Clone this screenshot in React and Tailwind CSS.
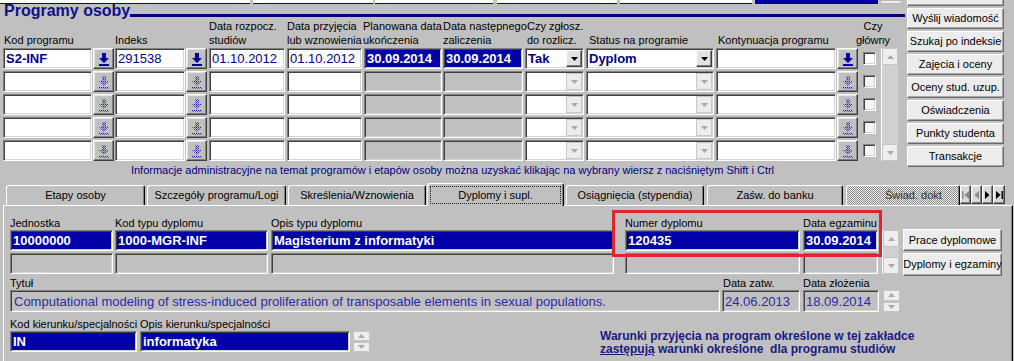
import React from 'react';

const sunk =
  'border border-t-[#808080] border-l-[#808080] border-r-white border-b-white shadow-[inset_1px_1px_0_#404040,inset_-1px_-1px_0_#d4d4d4]';
const raised =
  'border border-t-white border-l-white border-r-[#404040] border-b-[#404040] shadow-[inset_-1px_-1px_0_#808080,inset_1px_1px_0_#e4e4e4]';
const soft =
  'border border-t-white border-l-white border-r-[#6a6a6a] border-b-[#6a6a6a] shadow-[inset_-1px_-1px_0_#a8a8a8]';

function Field({ className = '', tone = 'white', children }) {
  const look =
    tone === 'blue'
      ? 'bg-[#0000a8] text-white font-bold'
      : tone === 'gray'
      ? 'bg-[#c0c0c0]'
      : 'bg-white';
  return (
    <div
      className={`${sunk} ${look} h-full flex items-center pl-[2px] text-[13px] leading-none whitespace-nowrap overflow-hidden ${className}`}
    >
      {children}
    </div>
  );
}

const DownArrow = () => (
  <svg width="10" height="14" viewBox="0 0 10 14">
    <path d="M3 1h4v5h3l-5 5-5-5h3z" fill="#0000a0" />
    <rect x="0" y="12" width="10" height="2" fill="#0000a0" />
  </svg>
);

const DotArrow = () => (
  <svg width="10" height="14" viewBox="0 0 10 14">
    <defs>
      <pattern id="dots" width="2" height="2" patternUnits="userSpaceOnUse">
        <rect width="1" height="1" fill="#1c1c96" />
        <rect x="1" y="1" width="1" height="1" fill="#6a6ab4" />
      </pattern>
    </defs>
    <path d="M3 1h4v5h3l-5 5-5-5h3z" fill="url(#dots)" />
    <rect x="0" y="12" width="10" height="2" fill="url(#dots)" />
  </svg>
);

const Tri = ({ up, color }) => (
  <svg width="7" height="4" viewBox="0 0 7 4">
    <path d={up ? 'M0 4h7L3.5 0z' : 'M0 0h7L3.5 4z'} fill={color} />
  </svg>
);

function ArrowBtn({ className = '', active }) {
  return (
    <div className={`${raised} ${className} w-[21px] h-full bg-[#c0c0c0] flex items-center justify-center`}>
      {active ? <DownArrow /> : <DotArrow />}
    </div>
  );
}

function Combo({ className = '', value, active }) {
  return (
    <div className={`${sunk} ${className} h-full bg-white flex items-center`}>
      <span className="flex-1 pl-[2px] text-[13px] font-bold text-[#00008b] leading-none">{value}</span>
      {active ? (
        <div className={`${raised} w-[16px] h-[17px] mr-[1px] bg-[#e2e2e2] flex items-center justify-center`}>
          <Tri color="#000" />
        </div>
      ) : (
        <div className="w-[16px] h-[17px] mr-[1px] bg-[#ececec] border border-[#c8c8c8] flex items-center justify-center">
          <Tri color="#a8a8a8" />
        </div>
      )}
    </div>
  );
}

function ScrollBtn({ up, className = '' }) {
  return (
    <div className={`w-full bg-[#eeeeee] border border-[#c4c4c4] flex items-center justify-center ${className}`}>
      <Tri up={up} color="#a8a8a8" />
    </div>
  );
}

function ScrollBar({ className = '' }) {
  return (
    <div className={`w-[17px] flex flex-col bg-[#d0d0d0] border-l border-l-white ${className}`}>
      <ScrollBtn up className="h-[17px]" />
      <div className="flex-1" />
      <ScrollBtn className="h-[17px]" />
    </div>
  );
}

function Spin({ className = '' }) {
  return (
    <div className={`w-[17px] flex flex-col gap-[1px] ${className}`}>
      <ScrollBtn up className="flex-1" />
      <ScrollBtn className="flex-1" />
    </div>
  );
}

function Btn({ className = '', children }) {
  return (
    <div className={`${soft} bg-[#ececec] flex items-center justify-center text-[11px] leading-none whitespace-nowrap ${className}`}>
      {children}
    </div>
  );
}

function ProgramRow({ first }) {
  return (
    <div className="flex h-[21px] items-center pl-[3px]">
      <Field className="w-[89px] font-bold text-[#00008b]">{first && 'S2-INF'}</Field>
      <ArrowBtn className="ml-[1px]" active={first} />
      <Field className="ml-[1px] w-[70px] text-[#00008b]">{first && '291538'}</Field>
      <ArrowBtn className="ml-[1px]" active={first} />
      <Field className="ml-[2px] w-[76px] text-[#00008b]">{first && '01.10.2012'}</Field>
      <Field className="ml-[2px] w-[75px] text-[#00008b]">{first && '01.10.2012'}</Field>
      <Field tone={first ? 'blue' : 'gray'} className="ml-[2px] w-[78px]">{first && '30.09.2014'}</Field>
      <Field tone={first ? 'blue' : 'gray'} className="ml-[1px] w-[80px]">{first && '30.09.2014'}</Field>
      <Combo className="ml-[2px] w-[59px]" value={first ? 'Tak' : ''} active={first} />
      <Combo className="ml-[2px] w-[128px]" value={first ? 'Dyplom' : ''} active={first} />
      <Field className="ml-[2px] w-[120px]" />
      <ArrowBtn className="ml-[1px]" active={first} />
      <div className={`${sunk} ml-[5px] w-[13px] h-[13px] ${first ? 'bg-white' : 'bg-[#f4f4f4]'}`} />
    </div>
  );
}

function Tab({ className = '', children }) {
  return (
    <div
      className={`h-[20px] flex items-center justify-center text-[11px] leading-none whitespace-nowrap border-t border-l border-r border-t-white border-l-white border-r-black shadow-[inset_-1px_0_0_#808080] rounded-t-[3px] ${className}`}
    >
      {children}
    </div>
  );
}

export default function App() {
  const sideButtons = [
    'Wyślij wiadomość',
    'Szukaj po indeksie',
    'Zajęcia i oceny',
    'Oceny stud. uzup.',
    'Oświadczenia',
    'Punkty studenta',
    'Transakcje',
  ];

  return (
    <div className="relative w-[1014px] h-[361px] overflow-hidden bg-[#c0c0c0] text-black font-['Liberation_Sans',Arial,sans-serif]">
      {/* Programy osoby */}
      <div className="flex">
        <div className="w-[905px] flex flex-col">
          {/* remains of the block above */}
          <div className="flex h-[4px]">
            <div className="w-[250px] bg-white border-b border-b-[#000080]" />
            <div className="ml-[3px] w-[120px] bg-white border-b border-b-[#000080]" />
            <div className="ml-[2px] w-[118px] bg-white border-b border-b-[#000080]" />
            <div className="ml-[4px] w-[120px] bg-white border-b border-b-[#000080]" />
            <div className="ml-[3px] w-[132px] bg-white border-b border-b-[#000080]" />
            <div className="ml-[3px] w-[123px] bg-[#0000a8] border-b border-b-[#000080]" />
            <div className="ml-[2px] w-[22px] bg-[#ececec] border border-[#b8b8b8]" />
          </div>

          <div className="flex h-[15px]">
            <span className="pl-[4px] text-[16px] leading-[14px] font-bold text-[#10108a] whitespace-nowrap">
              Programy osoby
            </span>
            <div className="flex-1 self-end mb-[2px] h-[3px] bg-[#000080]" />
          </div>

          {/* column headers */}
          <div className="flex h-[28px] items-end text-[11px] leading-[14px] whitespace-nowrap">
            <div className="w-[115px] pl-[4px]">Kod programu</div>
            <div className="w-[94px]">Indeks</div>
            <div className="w-[78px]">Data rozpocz.<br />studiów</div>
            <div className="w-[76px]">Data przyjęcia<br />lub wznowienia</div>
            <div className="w-[80px]">Planowana data<br />ukończenia</div>
            <div className="w-[84px]">Data następnego<br />zaliczenia</div>
            <div className="w-[62px]">Czy zgłosz.<br />do rozlicz.</div>
            <div className="w-[129px]">Status na programie</div>
            <div className="w-[132px]">Kontynuacja programu</div>
            <div className="w-[46px] text-center">Czy<br />główny</div>
          </div>

          {/* rows */}
          <div className="mt-[1px] flex">
            <div className="flex flex-col gap-[2px]">
              {[0, 1, 2, 3, 4].map((i) => (
                <ProgramRow key={i} first={i === 0} />
              ))}
            </div>
            <ScrollBar className="ml-[5px] h-[113px]" />
          </div>

          <p className="mt-[2px] h-[14px] text-center text-[11px] leading-[14px] text-[#000080] whitespace-nowrap">
            Informacje administracyjne na temat programów i etapów osoby można uzyskać klikając na wybrany wiersz z naciśniętym Shift i Ctrl
          </p>
        </div>

        <div className="ml-[2px] -mt-[15px] w-[97px] flex flex-col gap-[2px]">
          <Btn className="h-[21px]" />
          {sideButtons.map((b) => (
            <Btn key={b} className="h-[21px]">
              {b}
            </Btn>
          ))}
        </div>
      </div>

      {/* tabs */}
      <div className="mt-[6px] flex items-end h-[22px] pl-[6px]">
        <Tab className="w-[139px]">Etapy osoby</Tab>
        <Tab className="ml-[2px] w-[139px]">Szczegóły programu/Logi</Tab>
        <Tab className="ml-[2px] w-[138px]">Skreślenia/Wznowienia</Tab>
        <div className="relative z-10 ml-[1px] w-[137px] h-[23px] -mb-[1px] flex bg-[#c0c0c0] border-t border-l border-r border-t-white border-l-white border-r-black shadow-[inset_-1px_0_0_#808080] rounded-t-[3px]">
          <div className="flex-1 mx-[2px] mt-[2px] mb-[2px] border border-dotted border-[#202020] flex items-center justify-center text-[11px] leading-none whitespace-nowrap">
            Dyplomy i supl.
          </div>
        </div>
        <Tab className="ml-[2px] w-[138px]">Osiągnięcia (stypendia)</Tab>
        <Tab className="ml-[3px] w-[136px]">Zaśw. do banku</Tab>
        <Tab className="ml-[3px] w-[114px] !justify-start pl-[38px] text-[#303030] [background-image:repeating-conic-gradient(#8a8a8a_0%_25%,#eeeeee_0%_50%)] [background-size:2px_2px]">
          Świad. dokt
        </Tab>
        <div className="flex h-[19px] mb-[1px] bg-[#d8d8d8]">
          <div className={`${raised} w-[11px] flex items-center justify-center`}>
            <svg width="7" height="8" viewBox="0 0 7 8">
              <rect width="1.5" height="8" fill="#8a8a8a" />
              <path d="M7 0v8L2.5 4z" fill="#8a8a8a" />
            </svg>
          </div>
          <div className={`${raised} w-[11px] flex items-center justify-center`}>
            <svg width="5" height="8" viewBox="0 0 5 8">
              <path d="M5 0v8L0.5 4z" fill="#8a8a8a" />
            </svg>
          </div>
          <div className={`${raised} w-[11px] flex items-center justify-center`}>
            <svg width="5" height="8" viewBox="0 0 5 8">
              <path d="M0 0v8l4.5-4z" fill="#000" />
            </svg>
          </div>
          <div className={`${raised} w-[12px] flex items-center justify-center`}>
            <svg width="7" height="8" viewBox="0 0 7 8">
              <path d="M0 0v8l4.5-4z" fill="#000" />
              <rect x="5.5" width="1.5" height="8" fill="#000" />
            </svg>
          </div>
        </div>
      </div>

      {/* tab page */}
      <div className="ml-[3px] w-[1010px] h-[200px] border-t border-l border-r border-t-white border-l-white border-r-black shadow-[inset_-1px_0_0_#808080] pl-[6px] pt-[10px]">
        {/* diplomas */}
        <div className="flex items-start">
          <div className="flex flex-col">
            <div className="flex h-[14px] text-[11px] leading-[14px] whitespace-nowrap">
              <div className="w-[105px]">Jednostka</div>
              <div className="w-[156px]">Kod typu dyplomu</div>
              <div className="w-[354px]">Opis typu dyplomu</div>
              <div className="w-[178px]">Numer dyplomu</div>
              <div>Data egzaminu</div>
            </div>
            <div className="flex h-[21px]">
              <Field tone="blue" className="w-[103px]">10000000</Field>
              <Field tone="blue" className="ml-[2px] w-[153px]">1000-MGR-INF</Field>
              <Field tone="blue" className="ml-[3px] w-[343px]">Magisterium z informatyki</Field>
              <Field tone="blue" className="ml-[11px] w-[175px]">120435</Field>
              <Field tone="blue" className="ml-[3px] w-[75px]">30.09.2014</Field>
            </div>
            <div className="mt-[2px] flex h-[21px]">
              <Field tone="gray" className="w-[103px]" />
              <Field tone="gray" className="ml-[2px] w-[153px]" />
              <Field tone="gray" className="ml-[3px] w-[343px]" />
              <Field tone="gray" className="ml-[11px] w-[175px]" />
              <Field tone="gray" className="ml-[3px] w-[75px]" />
            </div>
          </div>
          <ScrollBar className="ml-[4px] mt-[14px] h-[44px]" />
          <div className="ml-[4px] mt-[13px] -mb-[2px] w-[99px] flex flex-col gap-[2px]">
            <Btn className="h-[22px]">Prace dyplomowe</Btn>
            <Btn className="h-[23px]">Dyplomy i egzaminy</Btn>
          </div>
        </div>

        {/* title */}
        <div className="flex flex-col">
          <div className="flex h-[16px] items-end text-[11px] leading-[13px] whitespace-nowrap">
            <div className="w-[713px]">Tytuł</div>
            <div className="w-[80px]">Data zatw.</div>
            <div>Data złożenia</div>
          </div>
          <div className="flex h-[22px]">
            <Field tone="gray" className="w-[710px] !pl-[3px] text-[#2a2aa6]">
              Computational modeling of stress-induced proliferation of transposable elements in sexual populations.
            </Field>
            <Field tone="gray" className="ml-[2px] w-[78px] text-[#2a2aa6]">24.06.2013</Field>
            <Field tone="gray" className="ml-[3px] w-[76px] text-[#2a2aa6]">18.09.2014</Field>
            <Spin className="ml-[4px] h-full" />
          </div>
        </div>

        {/* specialisation + note */}
        <div className="flex items-start">
          <div className="flex flex-col">
            <div className="flex h-[19px] items-end text-[11px] leading-[13px] whitespace-nowrap">
              <div className="w-[130px]">Kod kierunku/specjalności</div>
              <div>Opis kierunku/specjalności</div>
            </div>
            <div className="flex h-[21px]">
              <Field tone="blue" className="w-[127px]">IN</Field>
              <Field tone="blue" className="ml-[3px] w-[210px]">informatyka</Field>
              <Spin className="ml-[3px] h-full" />
            </div>
          </div>
          <div className="ml-[230px] mt-[18px] text-[12px] leading-[13px] font-bold text-[#1a1a80] whitespace-nowrap">
            <div>Warunki przyjęcia na program określone w tej zakładce</div>
            <div>
              <span className="underline">zastępują</span> warunki określone&nbsp; dla programu studiów
            </div>
          </div>
        </div>
      </div>

      {/* highlight drawn over the form */}
      <div className="absolute left-[612px] top-[210px] w-[270px] h-[47px] border-[3px] border-[#e3222b]" />
    </div>
  );
}
